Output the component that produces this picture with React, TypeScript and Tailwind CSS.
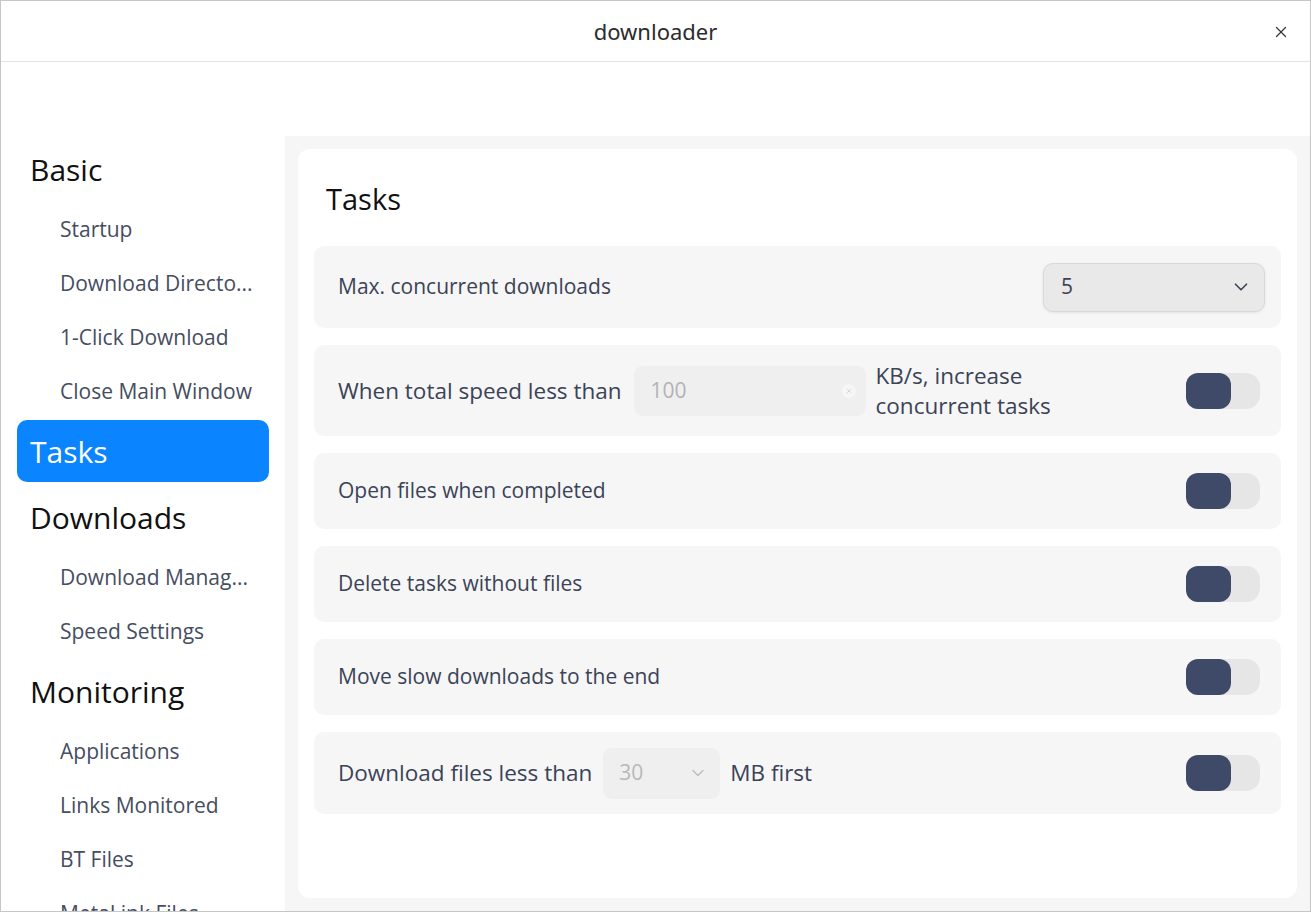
import { X, ChevronDown } from "lucide-react";

type NavItem = { label: string; heading?: boolean; active?: boolean };

const nav: NavItem[] = [
  { label: "Basic", heading: true },
  { label: "Startup" },
  { label: "Download Directo..." },
  { label: "1-Click Download" },
  { label: "Close Main Window" },
  { label: "Tasks", heading: true, active: true },
  { label: "Downloads", heading: true },
  { label: "Download Manag..." },
  { label: "Speed Settings" },
  { label: "Monitoring", heading: true },
  { label: "Applications" },
  { label: "Links Monitored" },
  { label: "BT Files" },
  { label: "MetaLink Files" },
];

function Toggle() {
  return (
    <div className="mr-[5px] flex h-[36px] w-[74px] shrink-0 rounded-[14px] bg-[#e6e6e6]">
      <div className="h-[36px] w-[45px] rounded-[12px] bg-[#3f4a68]" />
    </div>
  );
}

function Row({
  h,
  children,
  right,
  big = false,
}: {
  h: string;
  children: React.ReactNode;
  right?: React.ReactNode;
  big?: boolean;
}) {
  return (
    <div className={`flex ${h} items-center justify-between rounded-[10px] bg-[#f6f6f6] pl-6 pr-4`}>
      <div className={`flex items-center text-[#3b4356] ${big ? "text-[22.5px]" : "text-[21px]"}`}>{children}</div>
      {right ?? <Toggle />}
    </div>
  );
}

export default function App() {
  return (
    <div
      className="flex h-[912px] w-[1311px] flex-col overflow-hidden border border-[#c6c6c6] bg-white"
      style={{ fontFamily: '"Open Sans", "Noto Sans", sans-serif' }}
    >
      {/* barra de titulo */}
      <div
        className="relative flex h-[61px] shrink-0 items-center justify-center border-b border-[#e4e4e4] pt-[1px]"
        style={{ fontFamily: '"Noto Sans", sans-serif' }}
      >
        <span className="text-[22px] text-[#2c2c2c]">downloader</span>
        <X className="absolute right-[20px] top-[22px] h-[18px] w-[18px] text-[#333]" strokeWidth={1.6} />
      </div>
      <div className="h-[74px] shrink-0" />

      <div className="flex min-h-0 flex-1">
        {/* sidebar */}
        <div className="flex w-[284px] shrink-0 flex-col">
          {nav.map((item) =>
            item.heading ? (
              <div
                key={item.label}
                className={`mx-[16px] mb-[2px] mt-[2px] flex h-[62px] shrink-0 items-center rounded-[10px] px-[13px] text-[30px] ${
                  item.active ? "bg-[#0a84ff] text-white" : "text-[#111]"
                }`}
              >
                {item.label}
              </div>
            ) : (
              <div
                key={item.label}
                className="flex h-[54px] shrink-0 items-center whitespace-nowrap pl-[59px] pt-[2px] text-[21px] text-[#454d60]"
              >
                {item.label}
              </div>
            )
          )}
        </div>

        {/* conteudo */}
        <div className="flex-1 bg-[#f6f6f6] p-[13px]">
          <div className="h-[749px] rounded-[12px] bg-white px-4 pt-[30px]">
            <h1 className="mb-[27px] h-[40px] pl-[12px] text-[29px] leading-[40px] text-[#111]">Tasks</h1>
            <div className="flex flex-col gap-[17px]">
              <Row
                h="h-[82px]"
                right={
                  <div className="flex h-[49px] w-[222px] items-center justify-between rounded-[10px] border border-[#d9d9d9] bg-[#e9e9e9] pl-[17px] pr-[12px] text-[21px] text-[#3b4356] shadow-[0_1px_3px_rgba(0,0,0,0.08)]">
                    <span>5</span>
                    <ChevronDown className="h-[22px] w-[22px] text-[#3b4356]" strokeWidth={1.8} />
                  </div>
                }
              >
                Max. concurrent downloads
              </Row>
              <Row h="h-[91px]" big>
                <span className="mr-[12px]">When total speed less than</span>
                <div className="flex h-[50px] w-[232px] items-center justify-between rounded-[9px] bg-[#efefef] pl-[17px] pr-[10px] text-[21px]">
                  <span className="text-[#b3b3b3]">100</span>
                  <span className="flex h-[14px] w-[14px] items-center justify-center rounded-full bg-[#f6f6f6]">
                    <X className="h-[8px] w-[8px] text-[#c8c8c8]" strokeWidth={2} />
                  </span>
                </div>
                <span className="ml-[10px] w-[200px] leading-[30px]">KB/s, increase concurrent tasks</span>
              </Row>
              <Row h="h-[76px]">Open files when completed</Row>
              <Row h="h-[76px]">Delete tasks without files</Row>
              <Row h="h-[76px]">Move slow downloads to the end</Row>
              <Row h="h-[82px]" big>
                <span className="mr-[11px]">Download files less than</span>
                <div className="flex h-[51px] w-[117px] items-center justify-between rounded-[9px] bg-[#efefef] pl-[16px] pr-[12px] text-[21px]">
                  <span className="text-[#b8b8b8]">30</span>
                  <ChevronDown className="h-[20px] w-[20px] text-[#bdbdbd]" strokeWidth={1.6} />
                </div>
                <span className="ml-[10px]">MB first</span>
              </Row>
            </div>
          </div>
        </div>
      </div>
    </div>
  );
}
